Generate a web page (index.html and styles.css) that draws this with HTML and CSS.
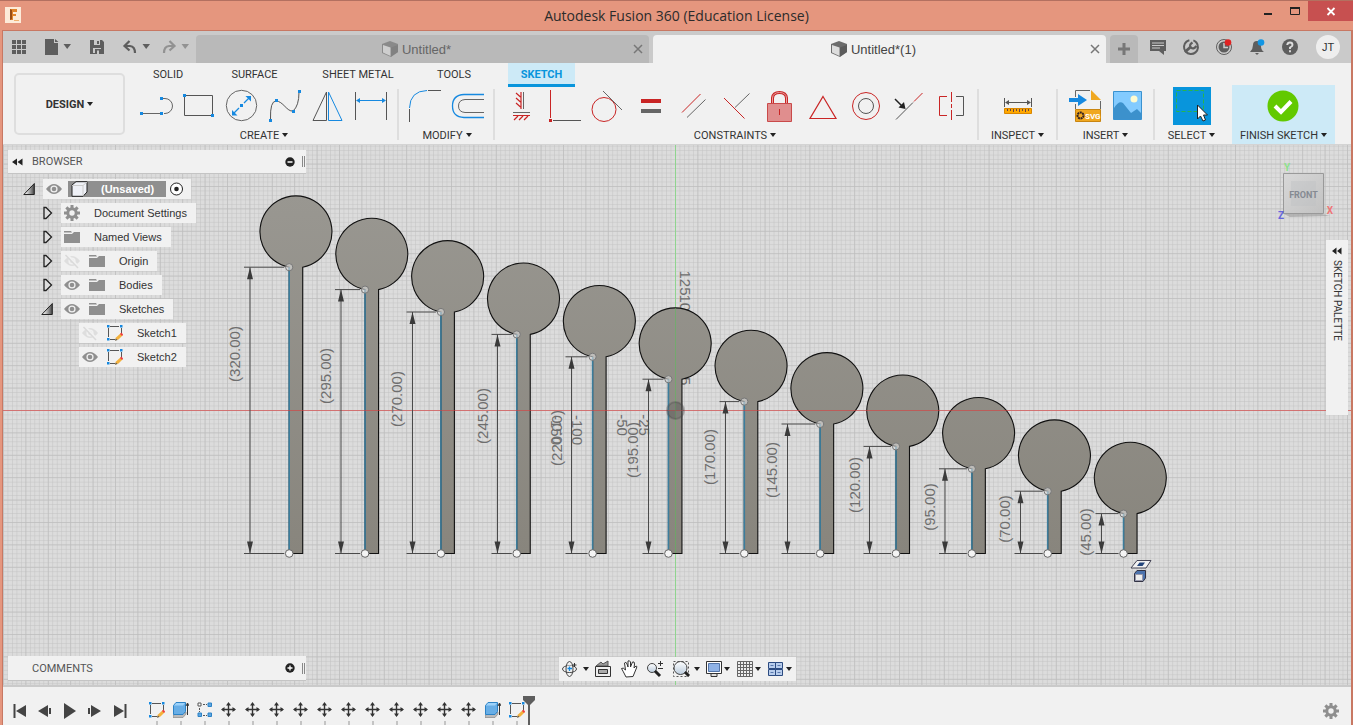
FILE: index.html
```html
<!DOCTYPE html>
<html lang="en">
<head>
<meta charset="utf-8">
<title>Autodesk Fusion 360 (Education License)</title>
<link rel="stylesheet" href="styles.css">
</head>
<body>
<svg class="defs" aria-hidden="true">
  <defs>
    <linearGradient id="corner" x1="0" y1="0" x2="1" y2="0"><stop offset="0.2" stop-color="#eee"/><stop offset="1" stop-color="#444"/></linearGradient>
    <linearGradient id="glass" x1="0" y1="0" x2="0" y2="1"><stop offset="0" stop-color="#fff"/><stop offset="1" stop-color="#bcd"/></linearGradient>
    <symbol id="eye" viewBox="0 0 16 16"><path d="M0 8Q4 3 8 3T16 8Q12 13 8 13T0 8Z" fill="#8f8f8f"/><circle cx="8" cy="8" r="3.6" fill="#f1f1f1"/><circle cx="8" cy="8" r="2.3" fill="#8f8f8f"/></symbol>
    <symbol id="eye-off" viewBox="0 0 16 16"><path d="M0 8Q4 3 8 3T16 8Q12 13 8 13T0 8Z" fill="#dedede"/><circle cx="8" cy="8" r="3.6" fill="#f1f1f1"/><circle cx="8" cy="8" r="2" fill="#dedede"/><path d="M2 1L15 15" stroke="#f1f1f1" stroke-width="3"/><path d="M1.500 2L14 15" stroke="#dadada" stroke-width="1.500"/></symbol>
    <symbol id="folder" viewBox="0 0 16 16"><path d="M0 2H7L8 3.500H0ZM0 5H8L10 3H16V14H0Z" fill="#8f8f8f"/></symbol>
    <symbol id="gear" viewBox="0 0 16 16"><g fill="#8f8f8f"><circle cx="8" cy="8" r="5.700"/><path d="M6.500 0H9.500V16H6.500Z"/><path d="M6.500 0H9.500V16H6.500Z" transform="rotate(45 8 8)"/><path d="M6.500 0H9.500V16H6.500Z" transform="rotate(90 8 8)"/><path d="M6.500 0H9.500V16H6.500Z" transform="rotate(135 8 8)"/></g><circle cx="8" cy="8" r="2.700" fill="#f1f1f1"/></symbol>
    <symbol id="sketch" viewBox="0 0 16 16"><path d="M3 1.500H12M1.500 3V12M14.500 3V9M3 14.500H8" stroke="#555" fill="none"/><path d="M0 0h2.500v2.500H0ZM13 0h2.500v2.500H13ZM0 13h2.500v2.500H0Z" fill="#1689e0"/><path d="M8 15.500L9 12.500L14 8L16 10L11.500 14.500Z" fill="#f4b13c"/><path d="M13 9L14.500 7.500L16 9.500L15 11Z" fill="#ee3b45"/><path d="M8 15.800L8.800 13.500L10.500 15Z" fill="#555"/></symbol>
    <symbol id="extrude" viewBox="0 0 16 16"><path d="M0 13V15.500H10L13 12V10Z" fill="#bbb" stroke="#888" stroke-width=".7"/><path d="M.5 3.500L3 .5H12.500V9.500L10 12.500H.5Z" fill="#68aee6" stroke="#2d83c6"/><path d="M1 3.500L3.300 1H12L10 3.500Z" fill="#9dd2fa"/><path d="M14.500 13V2M13 4L14.500 1L16 4" stroke="#333" fill="none"/></symbol>
    <symbol id="pattern" viewBox="0 0 16 16"><path d="M6 2.500H10M2.500 6V10M6 13.500H10" stroke="#555" stroke-dasharray="2 1"/><path d="M1 1h3v3H1Z" fill="#fff" stroke="#555"/><path d="M11 1h3.500v3.500H11ZM1 11h3.500v3.500H1ZM11 11h3.500v3.500H11Z" fill="#5da5e0" stroke="#2d83c6"/></symbol>
    <symbol id="move" viewBox="0 0 16 16"><path d="M7.500 2V14M1 7.500H14" stroke="#333" stroke-width="1.400"/><path d="M7.500 0L10 3.500H5ZM7.500 15L5 11.500H10ZM0 7.500L3.500 5V10ZM15 7.500L11.500 10V5Z" fill="#333"/></symbol>
    <symbol id="part" viewBox="0 0 16 16"><path d="M0 3L8 0L16 3V11L9 16L0 12Z" fill="#6c6c6c"/><path d="M1 4L8.500 6.500V15L1 11.500Z" fill="#ddd"/><path d="M9 6.500L16 4V11L9 15.500Z" fill="#5c5c5c"/></symbol>
    <symbol id="closed" viewBox="0 0 12 16"><path d="M3 2.500H5L10.500 8L5 13.500H3Z" fill="#ddd" stroke="#222" stroke-width="1.300"/></symbol>
    <symbol id="opened" viewBox="0 0 12 16"><path d="M.8 13.500L11.300 2.500V13.500Z" fill="url(#corner)" stroke="#222"/></symbol>
  </defs>
</svg>

<div class="window">
  <header class="titlebar">
    <svg class="app-icon" width="16" height="16"><path d="M0 0H16V16H0Z" fill="#fdebd9"/><path d="M5 2H12V5H8V7H11V9H8V13H5Z" fill="#e0852c"/><path d="M5 2V13L7 12V3Z" fill="#9a4d14"/><path d="M9 13.500h5" stroke="#f0b070"/></svg>
    <h1 class="title">Autodesk Fusion 360 (Education License)</h1>
    <div class="controls">
      <button aria-label="Minimize"><svg width="27" height="20"><path d="M10 13H18" stroke="#222" stroke-width="2"/></svg></button>
      <button aria-label="Maximize"><svg width="27" height="20"><path d="M9.500 7H18.500V13.500H9.500Z" fill="none" stroke="#222"/><path d="M9 7H19" stroke="#222" stroke-width="2"/></svg></button>
      <button class="close" aria-label="Close"><svg width="45" height="20"><path d="M19.500 7L26.500 14M26.500 7L19.500 14" stroke="#fff" stroke-width="1.800"/></svg></button>
    </div>
  </header>

  <div class="frame">
    <div class="tabbar">
      <div class="quick">
        <button aria-label="Data panel"><svg width="32" height="32" viewBox="3 31 32 32"><path d="M12 40h4v4h-4ZM17 40h4v4h-4ZM22 40h4v4h-4ZM12 45h4v4h-4ZM17 45h4v4h-4ZM22 45h4v4h-4ZM12 50h4v4h-4ZM17 50h4v4h-4ZM22 50h4v4h-4Z" fill="#5e5e5e"/></svg></button>
        <button aria-label="File"><svg width="45" height="32" viewBox="35 31 45 32"><path d="M45 39H54V43H58V55H45ZM55 39L58.500 42H55Z" fill="#5e5e5e"/><path d="M63.500 44H71L67.200 49Z" fill="#5e5e5e"/></svg></button>
        <button aria-label="Save"><svg width="36" height="32" viewBox="80 31 36 32"><path d="M90 40H102L104 42V54H90Z" fill="#5e5e5e"/><path d="M94 40h6v5h-6ZM93 48h8v5h-8Z" fill="#cacaca"/><path d="M97 41h2v3h-2ZM95 49h6v5h-6Z" fill="#5e5e5e"/><path d="M97 50.500h2v3.500h-2Z" fill="#cacaca"/></svg></button>
        <button aria-label="Undo"><svg width="38" height="32" viewBox="116 31 38 32"><path d="M124.500 46H130Q135 46.500 135 53M129.500 41L124.500 46L129.500 50.500" fill="none" stroke="#5e5e5e" stroke-width="2.200"/><path d="M142.500 44H150L146.200 49Z" fill="#5e5e5e"/></svg></button>
        <button aria-label="Redo"><svg width="38" height="32" viewBox="154 31 38 32"><path d="M174.500 46H169Q164 46.500 164 53M169.500 41L174.500 46L169.500 50.500" fill="none" stroke="#929292" stroke-width="2.200"/><path d="M181.500 44H189L185.200 49Z" fill="#929292"/></svg></button>
      </div>
      <div class="doc-tabs">
        <div class="doc-tab"><span class="doc-name faded"><svg width="16" height="16"><use href="#part"/></svg>Untitled*</span><button class="tab-close" aria-label="Close tab"><svg width="10" height="10"><path d="M1 1L9 9M9 1L1 9" stroke="#777" stroke-width="1.500"/></svg></button></div>
        <div class="doc-tab active"><span class="doc-name"><svg width="16" height="16"><use href="#part"/></svg>Untitled*(1)</span><button class="tab-close" aria-label="Close tab"><svg width="10" height="10"><path d="M1 1L9 9M9 1L1 9" stroke="#777" stroke-width="1.500"/></svg></button></div>
        <button class="new-tab" aria-label="New tab"><svg width="14" height="14"><path d="M7 1V13M1 7H13" stroke="#777" stroke-width="3"/></svg></button>
      </div>
      <div class="status">
        <button aria-label="Comments"><svg width="18" height="18"><path d="M1 2H17V13H15V17L10 13H1Z" fill="#5e5e5e"/><path d="M3 5H15M3 7.500H15M3 10H11" stroke="#cacaca"/></svg></button>
        <button aria-label="Extensions"><svg width="18" height="18"><circle cx="9" cy="9" r="7" fill="none" stroke="#5e5e5e" stroke-width="2" stroke-dasharray="36 4" transform="rotate(-40 9 9)"/><path d="M3 14L8.500 9" stroke="#5e5e5e" stroke-width="3"/><path d="M10.500 4.500Q6.500 7 9 9.500T14.500 8" stroke="#5e5e5e" stroke-width="2.200" fill="none"/></svg></button>
        <button aria-label="Job status"><svg width="18" height="18"><circle cx="9" cy="9" r="7.500" fill="#ccc" stroke="#5e5e5e"/><circle cx="9" cy="9" r="5.500" fill="#5e5e5e"/><path d="M9 5V9.500H13" stroke="#ccc" stroke-width="1.500" fill="none"/><circle cx="13" cy="4.500" r="3.300" fill="#e02222"/></svg></button>
        <button aria-label="Notifications"><svg width="18" height="18"><path d="M2 14Q5 11 5 7Q5 3 9 3Q12.500 3 13 8Q13 12 16 14ZM7 15h4l-2 2Z" fill="#5e5e5e"/><circle cx="13" cy="4.500" r="3.300" fill="#1296e4"/></svg></button>
        <button aria-label="Help"><svg width="18" height="18"><circle cx="9" cy="9" r="8" fill="#5e5e5e"/><path d="M6.200 7Q6.500 4.500 9 4.500T11.500 7Q11.500 8.300 9 9.500V11M9 12.300V14.300" stroke="#ddd" stroke-width="1.900" fill="none"/></svg></button>
        <button class="avatar">JT</button>
      </div>
    </div>

    <div class="ribbon">
      <button class="design">DESIGN<i class="caret"></i></button>
      <div class="tools">
        <nav class="modes">
          <button class="m-solid">SOLID</button><button class="m-surface">SURFACE</button><button class="m-sheet">SHEET METAL</button><button class="m-tools">TOOLS</button><button class="m-sketch">SKETCH</button>
        </nav>
        <div class="groups">
          <section class="group create">
            <div class="icons">
              <button aria-label="Line"><svg viewBox="135 88 43 36"><path d="M142 113.500H160M163 98.500H165A7 7 0 0 1 165 113.500H164" fill="none" stroke="#666"/><path d="M140 112h3v3h-3ZM160 112h3v3h-3ZM160 97h3v3h-3Z" fill="#1689e0"/></svg></button>
              <button aria-label="Rectangle"><svg viewBox="178 88 43 36"><path d="M184.500 95.500H212.500V115.500H184.500Z" fill="none" stroke="#555"/><path d="M183 94h3v3h-3ZM211 114h3v3h-3Z" fill="#1689e0"/></svg></button>
              <button aria-label="Circle"><svg viewBox="221 88 43 36"><circle cx="241.500" cy="105.500" r="15.200" fill="none" stroke="#666"/><path d="M233 114L239 108M244 103L250 97" stroke="#1689e0" stroke-width="1.300"/><path d="M232 115.500V110L237.500 115.500ZM251 96V101.500L245.500 96ZM240 104h3v3h-3Z" fill="#1689e0"/></svg></button>
              <button aria-label="Spline"><svg viewBox="264 88 43 36"><path d="M270.500 119Q270 101 276 101C283 101 287 112 293 111Q299 106 299 92" fill="none" stroke="#555"/><path d="M269 119h3v3h-3ZM275 99h3v3h-3ZM292 110h3v3h-3ZM298 90h3v3h-3Z" fill="#1689e0"/></svg></button>
              <button aria-label="Mirror"><svg viewBox="307 88 43 36"><path d="M326.500 92V120.500H313Z" fill="none" stroke="#555"/><path d="M328.500 92V120.500H342Z" fill="none" stroke="#1689e0"/></svg></button>
              <button aria-label="Sketch dimension"><svg viewBox="350 88 43 36"><path d="M355.500 92V120M386.500 92V120" stroke="#555"/><path d="M358 100.500H384" stroke="#1689e0"/><path d="M356 100.500L360 98V103ZM386 100.500L382 98V103Z" fill="#1689e0"/></svg></button>
            </div>
            <button class="label">CREATE<i class="caret"></i></button>
          </section>
          <section class="group modify">
            <div class="icons">
              <button aria-label="Fillet"><svg viewBox="404 88 43 36"><path d="M409.500 109V122M428 90.500H441" stroke="#555"/><path d="M409.500 108Q410 91 427 90.500" fill="none" stroke="#1689e0"/></svg></button>
              <button aria-label="Offset"><svg viewBox="447 88 43 36"><path d="M484 94.500H464Q452.500 95 452.500 106T464 117.500H484" fill="none" stroke="#1689e0" stroke-width="1.300"/><path d="M484 99.500H465Q458.500 100 458.500 106T465 112.500H484" fill="none" stroke="#666"/></svg></button>
            </div>
            <button class="label">MODIFY<i class="caret"></i></button>
          </section>
          <section class="group constraints">
            <div class="icons">
              <button aria-label="Horizontal/Vertical"><svg viewBox="499 88 43 36"><path d="M521 92V109M516 93L520.500 97M516 98L520.500 102M516 103L520.500 107M513 115.500H530M514 120L518 116M519 120L523 116M524 120L528 116" stroke="#c92525" stroke-width="1.200"/><path d="M523.500 92V109M513 112.500H530" stroke="#666"/></svg></button>
              <button aria-label="Coincident"><svg viewBox="542 88 43 36"><path d="M550.500 90V118" stroke="#c92525"/><path d="M549 119h3v3h-3Z" fill="#c92525"/><path d="M553 120.500H581" stroke="#555"/></svg></button>
              <button aria-label="Tangent"><svg viewBox="585 88 43 36"><circle cx="604" cy="109.500" r="12" fill="none" stroke="#c92525"/><path d="M603 91L622 110" stroke="#666"/></svg></button>
              <button aria-label="Equal"><svg viewBox="628 88 43 36"><path d="M641 99h20v4h-20Z" fill="#c92525"/><path d="M641 109h20v4h-20Z" fill="#666"/></svg></button>
              <button aria-label="Parallel"><svg viewBox="671 88 43 36"><path d="M682 112.500L700.500 94" stroke="#c92525"/><path d="M687 117.500L705.500 99.500" stroke="#666"/></svg></button>
              <button aria-label="Perpendicular"><svg viewBox="714 88 43 36"><path d="M724 98L744.500 118.500" stroke="#c92525"/><path d="M735 107.500L749.500 93.500" stroke="#666"/></svg></button>
              <button aria-label="Fix"><svg viewBox="757 88 43 36"><path d="M772.500 103V98Q773 92.500 779.500 92.500T786.500 98V103" fill="none" stroke="#c92525" stroke-width="3"/><path d="M772.500 103V98Q773 92.500 779.500 92.500T786.500 98V103" fill="none" stroke="#e8a0a0"/><path d="M767.500 103.500H791.500V121.500H767.500Z" fill="#e08e8e" stroke="#c94a4a"/><path d="M779.500 109V115" stroke="#c92525"/></svg></button>
              <button aria-label="Midpoint"><svg viewBox="800 88 43 36"><path d="M823 96.500L836 118.500H810Z" fill="none" stroke="#c92525" stroke-width="1.200"/></svg></button>
              <button aria-label="Concentric"><svg viewBox="843 88 43 36"><circle cx="866" cy="106" r="13.500" fill="none" stroke="#c92525"/><circle cx="866" cy="106" r="7.500" fill="none" stroke="#555"/></svg></button>
              <button aria-label="Collinear"><svg viewBox="886 88 43 36"><path d="M896 119.500L913 102.500" stroke="#555"/><path d="M914 101.500L922.500 93" stroke="#c92525"/><path d="M895 99L902 106" stroke="#222" stroke-width="1.500"/><path d="M905.500 109L904 102L898.500 107.500Z" fill="#222"/></svg></button>
              <button aria-label="Symmetry"><svg viewBox="929 88 43 36"><path d="M947 96.500H939.500V115.500H947M951.500 92V102M951.500 104V108M951.500 110V120" fill="none" stroke="#c92525"/><path d="M956 96.500H963.500V115.500H956" fill="none" stroke="#555"/></svg></button>
            </div>
            <button class="label">CONSTRAINTS<i class="caret"></i></button>
          </section>
          <section class="group inspect">
            <div class="icons"><button aria-label="Measure"><svg viewBox="996 88 43 36"><path d="M1004.500 98V107M1031.500 98V107M1006 102.500H1030" stroke="#555"/><path d="M1005 102.500L1009 100V105ZM1031 102.500L1027 100V105Z" fill="#555"/><path d="M1004.500 108.500H1031.500V113.500H1004.500Z" fill="#ffa800" stroke="#d98600"/><path d="M1007.500 109V111M1010.500 109V111M1013.500 109V112M1016.500 109V111M1019.500 109V112M1022.500 109V111M1025.500 109V112M1028.500 109V111" stroke="#644"/></svg></button></div>
            <button class="label">INSPECT<i class="caret"></i></button>
          </section>
          <section class="group insert">
            <div class="icons">
              <button aria-label="Insert SVG"><svg viewBox="1063 88 43 36"><path d="M1075.500 97V90.500H1090M1100.500 101V109M1075.500 104V109" fill="none" stroke="#666"/><path d="M1091 90V100H1101Z" fill="#f0a820"/><path d="M1069 98H1078V94L1087 100L1078 106V102H1069Z" fill="#1689e0"/><path d="M1075.500 109.500H1100.500V121.500H1075.500Z" fill="#f0a820" stroke="#c98510"/><circle cx="1080.500" cy="115.500" r="3" fill="none" stroke="#322" stroke-width="2" stroke-dasharray="2 .6"/><text x="1085" y="118.500" font-size="8" font-weight="700" font-family="Roboto, sans-serif" fill="#fff">SVG</text></svg></button>
              <button aria-label="Insert canvas"><svg viewBox="1106 88 43 36"><path d="M1113.500 91.500H1141.500V119.500H1113.500Z" fill="#83cbff" stroke="#3a92d0"/><path d="M1114 108Q1119 100 1123 103L1131 113L1137 109L1141 113V119H1114Z" fill="#3c91cc"/><circle cx="1134" cy="99" r="3.500" fill="#fffbd0"/></svg></button>
            </div>
            <button class="label">INSERT<i class="caret"></i></button>
          </section>
          <section class="group select">
            <div class="icons"><button aria-label="Select"><svg viewBox="1170 88 43 36"><path d="M1173 87H1211V125H1173Z" fill="#0895dc"/><path d="M1176.500 90.500H1203.500V111.500H1176.500Z" fill="none" stroke="#28b44c" stroke-dasharray="4 2"/><path d="M1197.500 105V119L1200.500 116L1203 121L1205.500 120L1203.500 115H1207.500Z" fill="#fff" stroke="#222"/></svg></button></div>
            <button class="label">SELECT<i class="caret"></i></button>
          </section>
          <section class="group finish">
            <div class="icons"><button aria-label="Finish sketch"><svg viewBox="1262 88 43 36"><circle cx="1283" cy="106" r="15.500" fill="#62c900"/><path d="M1275 106L1281 112L1291 101.500" fill="none" stroke="#fff" stroke-width="4"/></svg></button></div>
            <button class="label">FINISH SKETCH<i class="caret"></i></button>
          </section>
        </div>
      </div>
    </div>

    <main class="canvas">
      <svg class="scene" viewBox="3 145 1348 540" preserveAspectRatio="xMidYMid slice">
        <defs>
          <pattern id="minor" width="4.480" height="4.480" patternUnits="userSpaceOnUse" x="675" y="410"><path d="M0 0H4.480M0 0V4.480" stroke="#c2c2c2" stroke-width="1"/></pattern>
          <pattern id="major" width="22.400" height="22.400" patternUnits="userSpaceOnUse" x="675" y="410"><path d="M0 .5H22.400M.5 0V22.400" stroke="#bcbcbc" stroke-width=".6"/></pattern>
          <linearGradient id="steel" gradientUnits="userSpaceOnUse" x1="0" y1="195" x2="0" y2="554"><stop offset="0" stop-color="#999791"/><stop offset="1" stop-color="#88857d"/></linearGradient>
        </defs>
        <path d="M-1000 -500H2400V1300H-1000Z" fill="#dcdcdc"/>
        <path d="M-1000 -500H2400V1300H-1000Z" fill="url(#minor)"/>
        <path d="M-1000 -500H2400V1300H-1000Z" fill="url(#major)"/>
        <path d="M675.500 -500V1300" stroke="#8fd48f"/>
        <g class="ruler" id="ruler"></g>
        <g id="bodies"></g>
        <path d="M-1000 410.500H2400" stroke="#dc3c3c" stroke-opacity=".6"/>
        <path d="M675.500 308V553" stroke="#50c850" stroke-opacity=".45"/>
        <circle cx="675.500" cy="410.500" r="8.500" fill="#555" fill-opacity=".3" stroke="#444" stroke-opacity=".3" stroke-width="2"/>
        <path d="M675.500 402A8.500 8.500 0 0 1 684 410.500H667A8.500 8.500 0 0 0 675.500 419Z" fill="#444" fill-opacity=".15"/>
        <g id="dims"></g>
        <path d="M1131 568L1137 560.500H1151L1146 568Z" fill="#f2f2f2" stroke="#445"/><path d="M1137 566L1139.500 562.500H1145L1142.500 566Z" fill="#23457c"/><path d="M1134.500 573.500L1137 570.500H1145.500V578L1143 581.500H1134.500Z" fill="#4d74ae" stroke="#334"/><path d="M1135.500 574.500H1142.500V580.500H1135.500Z" fill="#eee" stroke="#99a"/>
      </svg>

      <aside class="browser">
        <div class="panel-head">
          <button aria-label="Collapse"><svg width="11" height="8"><path d="M0 4L5 .5V7.500ZM5.500 4L10.500 .5V7.500Z" fill="#222"/></svg></button>
          <h2>BROWSER</h2>
          <button aria-label="Minimize panel"><svg width="10" height="10"><circle cx="5" cy="5" r="4.700" fill="#222"/><path d="M2.500 5H7.500" stroke="#fff" stroke-width="1.500"/></svg></button><i class="grip"></i>
        </div>
        <ul class="tree">
          <li class="l0"><button class="toggle" aria-label="Collapse"><svg width="12" height="16"><use href="#opened"/></svg></button><div class="chip root"><svg width="16" height="16"><use href="#eye"/></svg><span class="picked"><svg width="17" height="16"><path d="M1 4L5 .7H16V11L12 15.300H1Z" fill="#eef0f6" stroke="#222"/><path d="M12 15V4.500L16 1M1 4.500H12" stroke="#ccc" fill="none"/></svg><b>(Unsaved)</b></span><svg width="15" height="16"><circle cx="7.500" cy="8" r="6" fill="#fff" stroke="#222"/><circle cx="7.500" cy="8" r="2.300" fill="#222"/></svg></div></li>
          <li class="l1"><button class="toggle" aria-label="Expand"><svg width="12" height="16"><use href="#closed"/></svg></button><div class="chip"><svg width="16" height="16"><use href="#gear"/></svg><span>Document Settings</span></div></li>
          <li class="l1"><button class="toggle" aria-label="Expand"><svg width="12" height="16"><use href="#closed"/></svg></button><div class="chip"><svg width="16" height="16"><use href="#folder"/></svg><span>Named Views</span></div></li>
          <li class="l1"><button class="toggle" aria-label="Expand"><svg width="12" height="16"><use href="#closed"/></svg></button><div class="chip"><svg width="16" height="16"><use href="#eye-off"/></svg><svg width="16" height="16"><use href="#folder"/></svg><span>Origin</span></div></li>
          <li class="l1"><button class="toggle" aria-label="Expand"><svg width="12" height="16"><use href="#closed"/></svg></button><div class="chip"><svg width="16" height="16"><use href="#eye"/></svg><svg width="16" height="16"><use href="#folder"/></svg><span>Bodies</span></div></li>
          <li class="l1"><button class="toggle" aria-label="Collapse"><svg width="12" height="16"><use href="#opened"/></svg></button><div class="chip"><svg width="16" height="16"><use href="#eye"/></svg><svg width="16" height="16"><use href="#folder"/></svg><span>Sketches</span></div></li>
          <li class="l2"><div class="chip"><svg width="16" height="16"><use href="#eye-off"/></svg><svg width="16" height="16"><use href="#sketch"/></svg><span>Sketch1</span></div></li>
          <li class="l2"><div class="chip"><svg width="16" height="16"><use href="#eye"/></svg><svg width="16" height="16"><use href="#sketch"/></svg><span>Sketch2</span></div></li>
        </ul>
      </aside>

      <div class="panel-head comments"><h2>COMMENTS</h2><button aria-label="Expand comments"><svg width="10" height="10"><circle cx="5" cy="5" r="4.700" fill="#222"/><path d="M2.500 5H7.500M5 2.500V7.500" stroke="#fff" stroke-width="1.300"/></svg></button><i class="grip"></i></div>

      <svg class="cube" width="60" height="62" viewBox="1275 160 60 62">
        <defs><linearGradient id="face" x1="0" y1="0" x2="1" y2="1"><stop offset="0" stop-color="#d8d8d8"/><stop offset="1" stop-color="#c2c2c2"/></linearGradient></defs>
        <path d="M1284 214L1322 214L1330 216L1290 217Z" fill="#999" opacity=".6"/>
        <path d="M1283.500 173.500H1323.500V213.500H1283.500Z" fill="url(#face)" stroke="#999"/>
        <path d="M1291 181H1316V206H1291Z" fill="#bfc1c4" opacity=".4"/>
        <g font-family="Roboto, sans-serif" font-weight="700" text-anchor="middle"><text x="1303.500" y="197.500" font-size="9" fill="#858a92">FRONT</text><text x="1287" y="171" font-size="10" fill="#8be28b">Y</text><text x="1330" y="214" font-size="10" fill="#ee7777">X</text><text x="1281" y="219" font-size="10" fill="#6666dd">Z</text></g>
      </svg>

      <button class="palette"><svg width="10" height="8"><path d="M0 4L4.500 .5V7.500ZM5 4L9.500 .5V7.500Z" fill="#222"/></svg><span>SKETCH PALETTE</span></button>

      <div class="navbar">
        <button aria-label="Orbit"><svg width="30" height="24" viewBox="559 657 30 24"><ellipse cx="569.500" cy="669" rx="7" ry="3.500" fill="none" stroke="#444"/><ellipse cx="569.500" cy="669" rx="3.500" ry="7.500" fill="none" stroke="#444"/><path d="M567 665.500h5v6h-5Z" fill="#f1f1f1"/><path d="M567.500 668.500H572M569.500 666.500V671" stroke="#1689e0" stroke-width="1.300"/><path d="M574.500 663v4M572.500 665h4" stroke="#333"/><path d="M583 667H589L586 671Z" fill="#222"/></svg></button>
        <button aria-label="Look at"><svg width="27" height="24" viewBox="589 657 27 24"><path d="M596 666L601 662L603 664L608 661V666Z" fill="#999" stroke="#555"/><path d="M595.500 666.500H610.500V676.500H595.500Z" fill="#eee" stroke="#333"/><path d="M598.500 669.500H607.500V673.500H598.500Z" fill="#aaa" stroke="#333"/></svg></button>
        <button aria-label="Pan"><svg width="26" height="24" viewBox="616 657 26 24"><path d="M626 677Q623 671 621.500 668.500Q623 667 625.500 670L624.500 663Q626 661 627 664L628 667V661Q629.500 660 630.500 662V667L632.500 662Q634.500 661 634.500 664L634 668L636 666Q637.500 666 636.500 668L633 676.500Z" fill="#fff" stroke="#333"/></svg></button>
        <button aria-label="Zoom"><svg width="28" height="24" viewBox="642 657 28 24"><circle cx="652" cy="668" r="4.500" fill="url(#glass)" stroke="#444"/><path d="M655 671L660 676" stroke="#222" stroke-width="3"/><path d="M658 663.500H663M660.500 661V666M658 668.500H663" stroke="#333"/></svg></button>
        <button aria-label="Fit"><svg width="32" height="24" viewBox="670 657 32 24"><path d="M673.500 661.500H688.500V676.500H673.500Z" fill="none" stroke="#555" stroke-dasharray="2 2"/><circle cx="680.500" cy="668" r="6.500" fill="url(#glass)" stroke="#444"/><path d="M685 672L689 676" stroke="#222" stroke-width="3"/><path d="M694 667H700L697 671Z" fill="#222"/></svg></button>
        <button aria-label="Display settings"><svg width="30" height="24" viewBox="702 657 30 24"><path d="M706.500 661.500H721.500V673.500H706.500Z" fill="#fff" stroke="#333"/><path d="M708.500 663.500H719.500V671.500H708.500Z" fill="#8fb2e6" stroke="#5274a8"/><path d="M711 674V676.500H717V674" fill="#ddd" stroke="#333"/><path d="M724 667H730L727 671Z" fill="#222"/></svg></button>
        <button aria-label="Grid and snaps"><svg width="31" height="24" viewBox="732 657 31 24"><path d="M737.500 661.500H752.500V676.500H737.500ZM740.500 661V677M743.500 661V677M746.500 661V677M749.500 661V677M737 664.500H753M737 667.500H753M737 670.500H753M737 673.500H753" fill="#eee" stroke="#666"/><path d="M755 667H761L758 671Z" fill="#222"/></svg></button>
        <button aria-label="Viewports"><svg width="33" height="24" viewBox="763 657 33 24"><path d="M768.500 662.500H775.500V668.500H768.500ZM775.500 662.500H782.500V668.500H775.500ZM768.500 669.500H775.500V675.500H768.500ZM775.500 669.500H782.500V675.500H775.500Z" fill="#b8cdec" stroke="#2b4a80"/><path d="M770.500 665.500h3M777.500 665.500h3M770.500 672.500h3M777.500 672.500h3" stroke="#5877ad"/><path d="M786 667H792L789 671Z" fill="#222"/></svg></button>
      </div>
    </main>

    <footer class="timeline">
      <div class="playback">
        <button aria-label="Go to start"><svg width="16" height="16"><path d="M2.500 1V15" stroke="#444" stroke-width="2"/><path d="M14 2V14L4 8Z" fill="#444"/></svg></button>
        <button aria-label="Step back"><svg width="16" height="16"><path d="M11 2V14L1 8ZM12 5h2v6h-2Z" fill="#444"/></svg></button>
        <button aria-label="Play"><svg width="16" height="16"><path d="M2 0V16L14 8Z" fill="#444"/></svg></button>
        <button aria-label="Step forward"><svg width="16" height="16"><path d="M4 2V14L14 8ZM1 5h2v6H1Z" fill="#444"/></svg></button>
        <button aria-label="Go to end"><svg width="16" height="16"><path d="M13.500 1V15" stroke="#444" stroke-width="2"/><path d="M2 2V14L12 8Z" fill="#444"/></svg></button>
      </div>
      <ol class="features" id="features"></ol>
      <svg class="marker" width="12" height="29"><path d="M0 0H12V4L7 9H5L0 4Z" fill="#5e5e5e"/><path d="M6 5V29" stroke="#5e5e5e" stroke-width="2"/></svg>
      <button class="settings" aria-label="Timeline settings"><svg width="16" height="16"><use href="#gear"/></svg></button>
    </footer>
  </div>
</div>
<script src="scene.js"></script>
</body>
</html>
```
FILE: styles.css
```css
* { box-sizing: border-box; }
body { margin: 0; background: #e5967e; font-family: "Liberation Sans", Arial, sans-serif; font-size: 11px; color: #333; }
button { border: 0; padding: 0; margin: 0; background: none; font: inherit; color: inherit; display: flex; align-items: center; justify-content: center; }
svg { display: block; flex: none; }
h1, h2, ul, ol { margin: 0; padding: 0; list-style: none; font-weight: 400; }
.defs { position: absolute; width: 0; height: 0; }
.window { display: flex; flex-direction: column; height: 100vh; overflow: hidden; }

.titlebar { display: flex; justify-content: space-between; height: 30px; background: #e5967e; border-top: 1px solid #b37060; }
.app-icon { margin: 6px 0 0 5px; }
.titlebar .title { flex: 1; padding-left: 78px; text-align: center; font: 14px/29px "Open Sans", sans-serif; color: #2b2b2b; }
.controls { display: flex; align-items: flex-start; }
.controls .close { background: #c75050; }

.frame { flex: 1; min-height: 0; display: flex; flex-direction: column; border: 1px solid #c87863; border-right-width: 2px; border-bottom: 0; margin-left: 2px; }
.tabbar { display: flex; height: 32px; background: #cacaca; }
.quick { display: flex; width: 193px; }
.doc-tabs { flex: 1; display: flex; gap: 4px; padding-top: 4px; }
.doc-tab { flex: 1; display: flex; align-items: center; padding-right: 6px; background: #b9b9b9; border-radius: 4px 4px 0 0; }
.doc-tab.active { background: #f1f1f1; }
.doc-name { flex: 1; display: flex; align-items: center; justify-content: center; gap: 4px; padding-left: 4px; font-size: 13px; color: #444; }
.doc-name.faded { color: #666; }
.doc-name.faded svg { opacity: .6; }
.new-tab { width: 28px; background: #b9b9b9; border-radius: 4px 4px 0 0; }
.status { display: flex; align-items: center; gap: 15px; padding: 0 11px; }
.avatar { width: 24px; height: 24px; margin-left: 2px; border-radius: 50%; background: #eee; font-size: 11px; }

.ribbon { display: flex; height: 82px; padding-left: 11px; background: #f1f1f1; border-bottom: 1px solid #d4d4d4; font-family: Roboto, sans-serif; }
.design { width: 111px; height: 62px; margin-top: 10px; border: 2px solid #dedede; border-radius: 5px; font-weight: 700; }
.caret { width: 0; height: 0; margin-left: 3px; border: 3px solid transparent; border-top: 4px solid #222; border-bottom: 0; }
.modes { display: flex; height: 24px; padding-left: 11px; }
.modes button { padding-bottom: 2px; }
.m-solid { width: 64px; }
.m-surface { width: 109px; }
.m-sheet { width: 98px; }
.m-tools { width: 94px; }
.modes .m-sketch { width: 67px; margin-left: 7px; padding-top: 1px; padding-bottom: 0; background: #cdeaf7; border-bottom: 3px solid #0895dc; font-weight: 700; color: #0895dc; }
.groups { display: flex; height: 57px; }
.group { position: relative; display: flex; flex-direction: column; align-items: center; }
.group::after { content: ""; position: absolute; right: 0; top: 2px; bottom: 4px; width: 2px; background: #dedede; }
.icons { display: flex; height: 39px; padding-top: 1px; }
.icons svg { width: 43px; height: 36px; overflow: visible; }
.icons button { height: 36px; }
.label { height: 18px; }
.create { width: 274px; padding-left: 4px; }
.modify { width: 96px; }
.constraints { width: 484px; padding-right: 4px; }
.inspect { width: 79px; padding-right: 2px; }
.insert { width: 97px; padding-right: 2px; }
.select { width: 73px; }
.select::after, .finish::after { display: none; }
.finish { width: 103px; margin-left: 4px; background: #cdeaf7; box-shadow: 0 -2px #cdeaf7; }

.canvas { flex: 1; min-height: 0; position: relative; overflow: hidden; background: #d9d9d9; }
.scene { position: absolute; inset: 0; width: 100%; height: 100%; }
.dim, .ruler { font-size: 15px; fill: #6e6e6e; text-anchor: middle; }
.browser { position: absolute; left: 5px; top: 5px; width: 298px; }
.panel-head { display: flex; align-items: center; height: 23px; padding: 0 1px 0 4px; background: #f1f1f1; box-shadow: 0 1px #c4c4c4; }
.panel-head h2 { flex: 1; padding-left: 9px; font: 11px Roboto, sans-serif; color: #555; }
.grip { width: 3px; height: 11px; margin-left: 7px; border: 1px solid #888; border-width: 0 1px; }
.comments { position: absolute; left: 5px; bottom: 5px; width: 298px; height: 24px; }
.comments h2 { padding-left: 20px; }
.tree { padding-top: 4px; }
.tree li { display: flex; align-items: center; height: 24px; }
.toggle { width: 20px; justify-content: flex-start; }
.l0 { padding-left: 15px; }
.l1 { padding-left: 33px; }
.l2 { padding-left: 71px; }
.chip { display: flex; align-items: center; gap: 9px; height: 20px; padding: 0 9px 0 3px; background: #f1f1f1; }
.chip > span:last-child { margin-left: 5px; }
.chip.root { gap: 6px; padding-right: 7px; }
.chip.root .picked { margin-right: -3px; }
.picked { display: flex; align-items: center; gap: 13px; height: 16px; padding: 0 12px 0 3px; background: #8f8f8f; color: #fff; }
.cube { position: absolute; right: 16px; top: 15px; }
.palette { position: absolute; right: 3px; top: 95px; width: 22px; height: 175px; flex-direction: column; justify-content: flex-start; gap: 5px; padding-top: 7px; background: #f1f1f1; font: 10px Roboto, sans-serif; }
.palette span { writing-mode: vertical-rl; }
.navbar { position: absolute; left: 50%; bottom: 4px; margin-left: -118px; display: flex; height: 24px; background: #f1f1f1; }

.timeline { display: flex; height: 40px; background: #f1f1f1; border-top: 2px solid #cacaca; padding-left: 9px; }
.playback { display: flex; align-items: center; gap: 9px; padding-top: 10px; }
.features { display: flex; padding: 15px 0 0 17px; }
.features li { width: 24px; height: 23px; display: flex; flex-direction: column; align-items: center; justify-content: space-between; }
.features li::after { content: ""; width: 2px; height: 4px; background: #c4c4c4; }
.marker { margin: 9px 0 0 -6px; }
.settings { margin: 10px 12px 0 auto; }
```
FILE: scene.js
```js
const SVG = "http://www.w3.org/2000/svg";

function add(parent, tag, attrs, text) {
  const node = document.createElementNS(SVG, tag);
  for (const key in attrs) node.setAttribute(key, attrs[key]);
  if (text) node.textContent = text;
  parent.appendChild(node);
  return node;
}

// length, dimension line x, label x, label y
const parts = [
  [320, 250, 235, 354], [295, 341, 326, 376], [270, 412.5, 397, 399], [245, 497.5, 483, 416],
  [220, 571.5, 557, 438], [195, 648.5, 633, 450], [170, 725.5, 710, 457], [145, 787.5, 772, 470],
  [120, 869.5, 855, 485], [95, 945, 930, 507], [70, 1020.5, 1005, 519], [45, 1101.5, 1086, 532]
];
const bodies = document.getElementById("bodies");
const dims = document.getElementById("dims");
const base = 553.5;

parts.forEach(([len, dx, tx, ty], i) => {
  const cx = 295.7 + 75.85 * i;
  const top = 267.2 + 22.4 * i;
  const x = cx - 6.5;
  add(bodies, "path", {
    d: `M${x} ${base}V${top}A36 36 0 1 1 ${cx + 7} ${top}V${base}Z`,
    fill: "url(#steel)", stroke: "#111", "stroke-width": 1.1
  });
  add(bodies, "path", { d: `M${x} ${base}V${top}`, stroke: "#3c7d9c", "stroke-width": 1.6 });
  add(dims, "path", { d: `M${dx - 6} ${top}H${x - 5}M${dx - 6} ${base}H${x - 5}M${dx} ${top}V${base}`, stroke: "#4a4a4a" });
  add(dims, "path", { d: `M${dx} ${top}l-3 12h6ZM${dx} ${base}l-3 -12h6Z`, fill: "#3a3a3a" });
  add(dims, "circle", { cx: x, cy: top, r: 3.6, fill: "#ddd", "fill-opacity": 0.6, stroke: "#777" });
  add(dims, "circle", { cx: x, cy: base, r: 3.8, fill: "#f4f4f4", stroke: "#666" });
  add(dims, "text", { class: "dim", transform: `translate(${tx + 5} ${ty}) rotate(-90)` }, `(${len}.00)`);
});

const ruler = document.getElementById("ruler");
[["125", 680, 283], ["100", 680, 307], ["25", 680, 377], ["-25", 639, 425], ["-50", 617, 425], ["-100", 572, 430], ["-150", 551, 430]]
  .forEach(([t, x, y]) => add(ruler, "text", { transform: `translate(${x} ${y}) rotate(90)` }, t));

const features = ["sketch", "extrude", "pattern", ...Array(11).fill("move"), "extrude", "sketch"];
const list = document.getElementById("features");
features.forEach(name => {
  const li = document.createElement("li");
  const svg = add(li, "svg", { width: 16, height: 16 });
  add(svg, "use", { href: "#" + name });
  list.appendChild(li);
});
```
